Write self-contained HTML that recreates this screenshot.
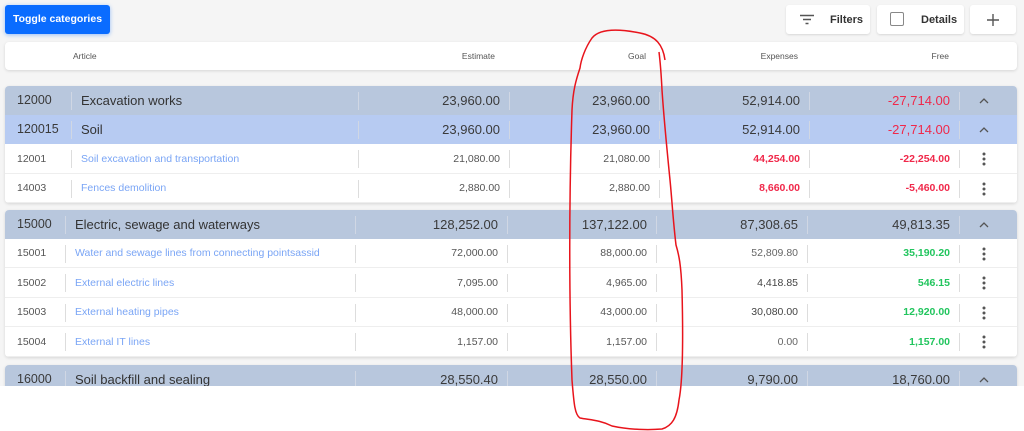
<!DOCTYPE html>
<html><head><style>
*{box-sizing:border-box;margin:0;padding:0}
body{width:1024px;height:431px;background:#fff;font-family:"Liberation Sans",Arial,sans-serif;position:relative;overflow:hidden;color:#333}
#bg{position:absolute;left:0;top:0;width:1024px;height:386px;background:#f5f5f5}
.abs{position:absolute}
.btn{position:absolute;top:5px;height:29px;background:#fff;border-radius:3px;box-shadow:0 1px 2px rgba(0,0,0,.12);font-size:11px;font-weight:bold;color:#333}
.card{position:absolute;left:5px;width:1012px;background:#fff;border-radius:4px;box-shadow:0 1px 3px rgba(0,0,0,.13);overflow:hidden}
.row{position:absolute;left:0;width:1012px;border-bottom:1px solid #eee}
.row span{position:absolute;top:0;white-space:nowrap}
.sep{position:absolute;width:1px;background:#ddd}
#cover{position:absolute;left:0;top:386px;width:1024px;height:45px;background:#fff}
</style></head><body>
<div id="bg"></div>
<div class="abs" style="left:5px;top:5px;width:105px;height:29px;background:#0a6cff;border-radius:3px;box-shadow:0 1px 4px rgba(10,108,255,.4);color:#fff;font-size:10.5px;font-weight:bold;line-height:29px;text-align:center">Toggle categories</div>
<div class="btn" style="left:786px;width:84px">
<svg class="abs" style="left:14px;top:9px" width="14" height="11"><path d="M0 1.5H14M3 5.5H11M5.5 9.5H8.5" stroke="#555" stroke-width="1.4"/></svg>
<span class="abs" style="left:44px;top:1px;line-height:29px">Filters</span></div>
<div class="btn" style="left:877px;width:87px">
<div class="abs" style="left:13px;top:7px;width:14px;height:14px;border:1.3px solid #888;border-radius:2px"></div>
<span class="abs" style="left:44px;top:1px;line-height:29px">Details</span></div>
<div class="btn" style="left:970px;width:46px">
<svg class="abs" style="left:17px;top:9px" width="12" height="12"><path d="M6 0V12M0 6H12" stroke="#555" stroke-width="1.4"/></svg></div>

<div class="card" style="top:42px;height:28px;font-size:8.5px;color:#555;line-height:28px">
<span class="abs" style="left:68px">Article</span>
<span class="abs" style="right:522px">Estimate</span>
<span class="abs" style="right:371px">Goal</span>
<span class="abs" style="right:219px">Expenses</span>
<span class="abs" style="right:68px">Free</span>
</div>

<div id="tables"></div>
<script>
const groups=[
 {top:86,s:[71,358,509,659,809,959],rows:[
  ['g','12000','Excavation works','23,960.00','23,960.00','52,914.00','-27,714.00','#b8c7dd',29,'#555','#f0284a'],
  ['g','120015','Soil','23,960.00','23,960.00','52,914.00','-27,714.00','#b7cbf2',29,'#555','#f0284a'],
  ['i','12001','Soil excavation and transportation','21,080.00','21,080.00','44,254.00','-22,254.00','#fff',30,'#f0284a','#f0284a'],
  ['i','14003','Fences demolition','2,880.00','2,880.00','8,660.00','-5,460.00','#fff',29,'#f0284a','#f0284a']]},
 {top:210,s:[65,355,507,656,807,959],rows:[
  ['g','15000','Electric, sewage and waterways','128,252.00','137,122.00','87,308.65','49,813.35','#b8c7dd',29,'#555','#555'],
  ['i','15001','Water and sewage lines from connecting pointsassid','72,000.00','88,000.00','52,809.80','35,190.20','#fff',29,'#666','#22c55e',false],
  ['i','15002','External electric lines','7,095.00','4,965.00','4,418.85','546.15','#fff',30,'#444','#22c55e',true],
  ['i','15003','External heating pipes','48,000.00','43,000.00','30,080.00','12,920.00','#fff',29,'#444','#22c55e',true],
  ['i','15004','External IT lines','1,157.00','1,157.00','0.00','1,157.00','#fff',30,'#666','#22c55e',false]]},
 {top:365,s:[65,355,507,656,807,959],rows:[
  ['g','16000','Soil backfill and sealing','28,550.40','28,550.00','9,790.00','18,760.00','#b8c7dd',29,'#555','#555']]}
];
let h='';
for(const g of groups){
 let tot=g.rows.reduce((a,r)=>a+r[8],0);
 const s=g.s.map(v=>v-5);
 h+=`<div class="card" style="top:${g.top}px;height:${tot}px">`;
 let y=0;
 for(const r of g.rows){
  const isG=r[0]=='g', H=r[8];
  const fs=isG?13:10.5, fc=isG?'#3a3a3a':'#555';
  const st=`line-height:${H}px;font-size:${fs}px;`;
  h+=`<div class="row" style="top:${y}px;height:${H}px;background:${r[7]};${isG?'border-bottom:none':''}">`;
  h+=`<span style="left:12px;${st}font-size:${isG?12.5:10.5}px;color:${fc}">${r[1]}</span>`;
  h+=`<span style="left:${s[0]+10}px;${st}color:${isG?'#333':'#7aa5f5'}">${r[2]}</span>`;
  h+=`<span style="right:${1012-s[2]+9}px;${st}color:${fc}">${r[3]}</span>`;
  h+=`<span style="right:${1012-s[3]+9}px;${st}color:${fc}">${r[4]}</span>`;
  const eb=isG?'':(r[9]=='#f0284a'||r[10]===true?'font-weight:bold;':'');
  h+=`<span style="right:${1012-s[4]+9}px;${st}color:${isG?'#3a3a3a':r[9]};${eb}">${r[5]}</span>`;
  h+=`<span style="right:${1012-s[5]+9}px;${st}color:${isG&&r[10]=='#555'?'#3a3a3a':r[10]};${isG?'':'font-weight:bold;'}">${r[6]}</span>`;
  for(const c of s) h+=`<div class="sep" style="left:${c}px;top:${H/2-9}px;height:18px;${isG?'background:#d0d7e4':''}"></div>`;
  if(isG) h+=`<svg class="abs" style="left:974px;top:${H/2-3}px" width="10" height="6"><path d="M1 5L5 1L9 5" fill="none" stroke="#555" stroke-width="1.3"/></svg>`;
  else h+=`<svg class="abs" style="left:977px;top:${H/2-7}px" width="4" height="14"><circle cx="2" cy="2" r="1.5" fill="#555"/><circle cx="2" cy="7" r="1.5" fill="#555"/><circle cx="2" cy="12" r="1.5" fill="#555"/></svg>`;
  h+=`</div>`;
  y+=H;
 }
 h+=`</div>`;
}
document.getElementById('tables').innerHTML=h;
</script>
<div id="cover"></div>
<svg class="abs" style="left:0;top:0" width="1024" height="431">
<path d="M665 60 C663 45 656 36 640 33 C620 29 600 28 592 38 C585 48 581 60 580 68 C576 80 573 90 572 110 C569 200 569 300 572 380 C574 405 575 415 580 418 C590 420 600 420 612 426 C630 430 650 430 662 429 C672 426 677 418 679 400 C683 380 683 330 682 290 C681 265 679 255 676 245 C673 220 672 200 670 180 C667 150 664 120 662 90 C661 70 660 60 659 52" fill="none" stroke="#e8141c" stroke-width="1.5"/>
</svg>
</body></html>
